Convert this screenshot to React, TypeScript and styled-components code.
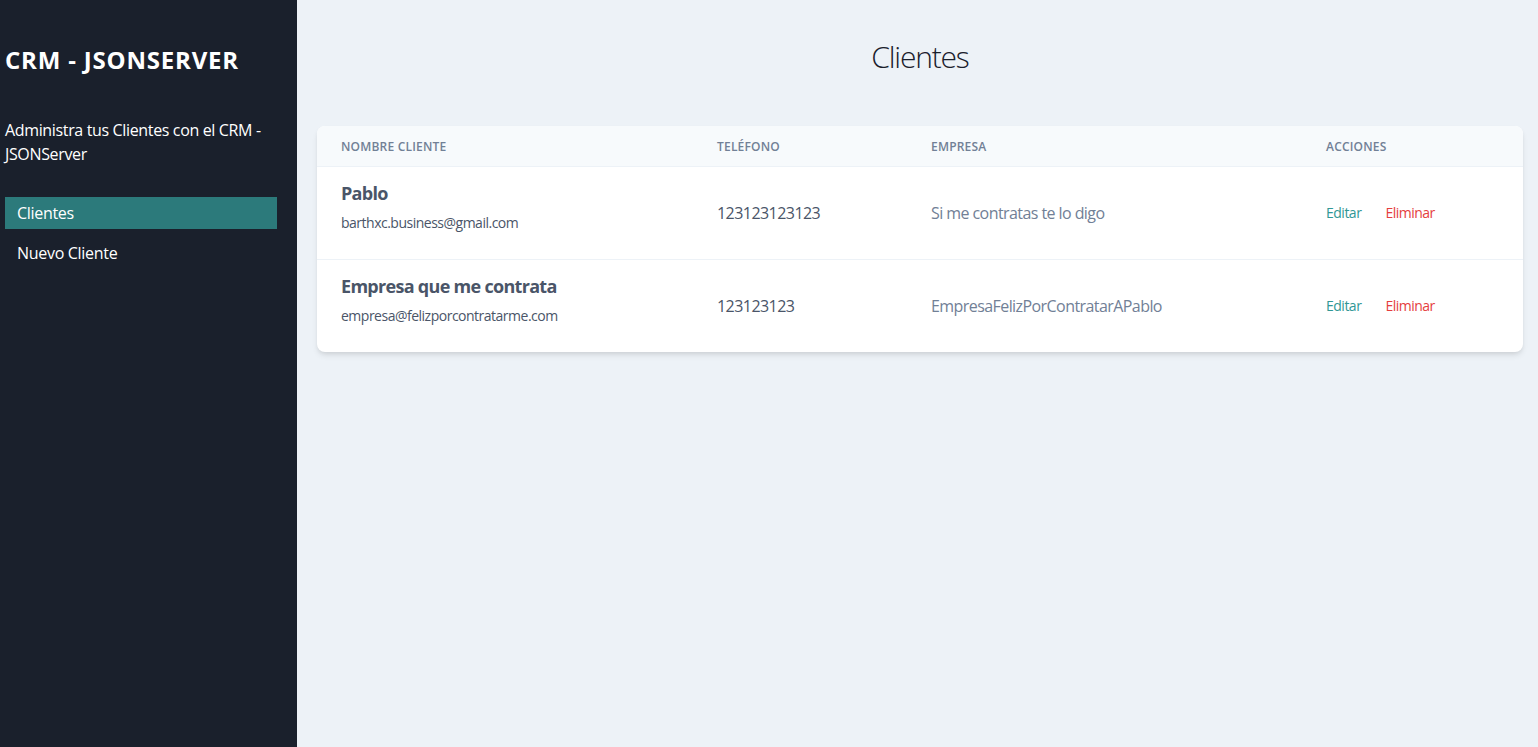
import React from "react";
import styled, { createGlobalStyle } from "styled-components";

const GlobalStyle = createGlobalStyle`
  * { box-sizing: border-box; }
  html, body { margin: 0; padding: 0; }
  body {
    font-family: "Open Sans", "Noto Sans", "Liberation Sans", sans-serif;
    background: #edf2f7;
    color: #1a202c;
  }
`;

const Layout = styled.div`
  display: flex;
  min-height: 747px;
`;

const Sidebar = styled.aside`
  width: 297px;
  flex-shrink: 0;
  background: #1a202c;
  padding: 44px 20px 0 5px;
  color: #ffffff;
`;

const Brand = styled.h1`
  margin: 0;
  font-size: 24px;
  line-height: 32px;
  font-weight: 700;
  letter-spacing: 0.8px;
`;

const Tagline = styled.p`
  margin: 42px 0 0;
  font-size: 16px;
  line-height: 24px;
  letter-spacing: -0.35px;
`;

const Nav = styled.nav`
  margin-top: 31px;
  display: flex;
  flex-direction: column;
  gap: 8px;
`;

const NavLink = styled.a<{ $active?: boolean }>`
  display: block;
  padding: 4px 12px;
  font-size: 16px;
  line-height: 24px;
  letter-spacing: -0.3px;
  color: #ffffff;
  text-decoration: none;
  background: ${(p) => (p.$active ? "#2c7a7b" : "transparent")};
`;

const Main = styled.main`
  flex: 1;
  padding: 37px 15px 0 20px;
`;

const Title = styled.h2`
  margin: 0;
  text-align: center;
  font-size: 30px;
  line-height: 40px;
  font-weight: 300;
  color: #1a202c;
  letter-spacing: -1.2px;
`;

const Card = styled.div`
  margin-top: 49px;
  background: #ffffff;
  border-radius: 8px;
  overflow: hidden;
  box-shadow: 0 4px 6px -1px rgba(0, 0, 0, 0.1), 0 2px 4px -1px rgba(0, 0, 0, 0.06);
`;

const columns = "376px 214px 395px 1fr";

const HeadRow = styled.div`
  display: grid;
  grid-template-columns: ${columns};
  height: 41px;
  align-items: center;
  background: #f7fafc;
  border-bottom: 1px solid #edf2f7;
`;

const HeadCell = styled.div`
  padding: 2px 24px 0;
  font-size: 12px;
  line-height: 16px;
  font-weight: 600;
  text-transform: uppercase;
  letter-spacing: 0.2px;
  color: #718096;
`;

const Row = styled.div`
  display: grid;
  grid-template-columns: ${columns};
  align-items: center;
  box-sizing: content-box;
  height: 92px;
  & + & {
    border-top: 1px solid #edf2f7;
  }
`;

const NameCell = styled.div`
  padding: 0 24px 14px;
`;

const Name = styled.div`
  font-size: 18px;
  line-height: 28px;
  font-weight: 700;
  color: #4a5568;
  letter-spacing: -0.7px;
`;

const Email = styled.div`
  margin-top: 6px;
  font-size: 14px;
  line-height: 20px;
  color: #4a5568;
  letter-spacing: -0.5px;
`;

const Cell = styled.div<{ $muted?: boolean }>`
  padding: 0 24px;
  font-size: 16px;
  line-height: 24px;
  letter-spacing: ${(p) => (p.$muted ? "-0.57px" : "-0.55px")};
  color: ${(p) => (p.$muted ? "#718096" : "#4a5568")};
`;

const Actions = styled.div`
  padding: 0 24px;
  display: flex;
  gap: 24px;
`;

const ActionButton = styled.button<{ $danger?: boolean }>`
  border: 0;
  background: none;
  padding: 0;
  font-family: inherit;
  font-size: 14px;
  line-height: 20px;
  letter-spacing: -0.5px;
  cursor: pointer;
  color: ${(p) => (p.$danger ? "#e53e3e" : "#319795")};
`;

const clients = [
  {
    name: "Pablo",
    email: "barthxc.business@gmail.com",
    phone: "123123123123",
    company: "Si me contratas te lo digo",
  },
  {
    name: "Empresa que me contrata",
    email: "empresa@felizporcontratarme.com",
    phone: "123123123",
    company: "EmpresaFelizPorContratarAPablo",
  },
];

export default function App() {
  return (
    <>
      <GlobalStyle />
      <Layout>
        <Sidebar>
          <Brand>CRM - JSONSERVER</Brand>
          <Tagline>Administra tus Clientes con el CRM - JSONServer</Tagline>
          <Nav>
            <NavLink href="#" $active>
              Clientes
            </NavLink>
            <NavLink href="#">Nuevo Cliente</NavLink>
          </Nav>
        </Sidebar>
        <Main>
          <Title>Clientes</Title>
          <Card>
            <HeadRow>
              <HeadCell>Nombre Cliente</HeadCell>
              <HeadCell>Teléfono</HeadCell>
              <HeadCell>Empresa</HeadCell>
              <HeadCell>Acciones</HeadCell>
            </HeadRow>
            {clients.map((c) => (
              <Row key={c.email}>
                <NameCell>
                  <Name>{c.name}</Name>
                  <Email>{c.email}</Email>
                </NameCell>
                <Cell>{c.phone}</Cell>
                <Cell $muted>{c.company}</Cell>
                <Actions>
                  <ActionButton>Editar</ActionButton>
                  <ActionButton $danger>Eliminar</ActionButton>
                </Actions>
              </Row>
            ))}
          </Card>
        </Main>
      </Layout>
    </>
  );
}
